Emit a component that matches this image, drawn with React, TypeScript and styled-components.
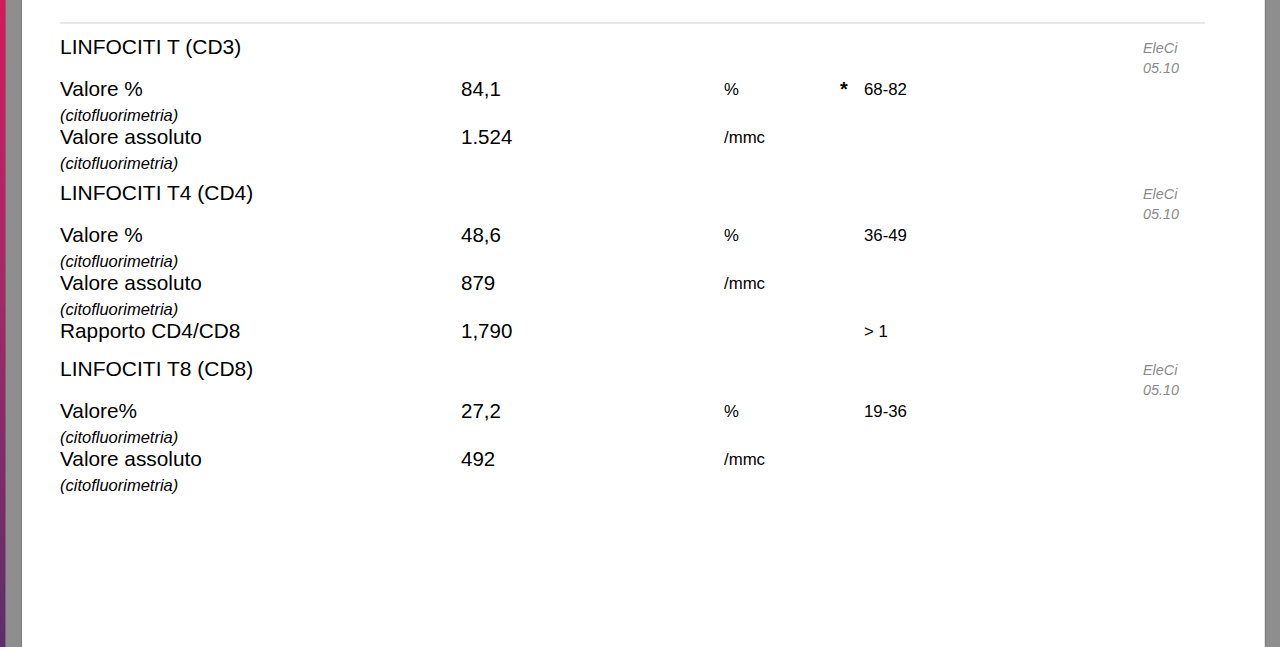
import React from "react";
import styled, { createGlobalStyle } from "styled-components";

type Row = {
	label: string;
	value: string;
	unit?: string;
	flag?: string;
	range?: string;
	method?: string;
};

type Section = {
	title: string;
	user: string;
	time: string;
	rows: Row[];
};

const METHOD = "(citofluorimetria)";

const sections: Section[] = [
	{
		title: "LINFOCITI T (CD3)",
		user: "EleCi",
		time: "05.10",
		rows: [
			{ label: "Valore %", value: "84,1", unit: "%", flag: "*", range: "68-82", method: METHOD },
			{ label: "Valore assoluto", value: "1.524", unit: "/mmc", method: METHOD },
		],
	},
	{
		title: "LINFOCITI T4 (CD4)",
		user: "EleCi",
		time: "05.10",
		rows: [
			{ label: "Valore %", value: "48,6", unit: "%", range: "36-49", method: METHOD },
			{ label: "Valore assoluto", value: "879", unit: "/mmc", method: METHOD },
			{ label: "Rapporto CD4/CD8", value: "1,790", range: "> 1" },
		],
	},
	{
		title: "LINFOCITI T8 (CD8)",
		user: "EleCi",
		time: "05.10",
		rows: [
			{ label: "Valore%", value: "27,2", unit: "%", range: "19-36", method: METHOD },
			{ label: "Valore assoluto", value: "492", unit: "/mmc", method: METHOD },
		],
	},
];

export default function App() {
	return (
		<>
			<GlobalStyle />
			<Screen>
				<AccentStrip />
				<Desk>
					<Page>
						<Rule />
						{sections.map((s) => (
							<Block key={s.title}>
								<Header>
									<Title>{s.title}</Title>
									<Stamp>
										{s.user}
										<br />
										{s.time}
									</Stamp>
								</Header>
								{s.rows.map((r) => (
									<ResultRow key={r.label} $bare={!r.method}>
										<LabelCell>
											<Label>{r.label}</Label>
											{r.method && <Method>{r.method}</Method>}
										</LabelCell>
										<Value>{r.value}</Value>
										<Unit>{r.unit}</Unit>
										<Flag>{r.flag}</Flag>
										<Range>{r.range}</Range>
									</ResultRow>
								))}
							</Block>
						))}
					</Page>
				</Desk>
			</Screen>
		</>
	);
}

const GlobalStyle = createGlobalStyle`
	html, body {
		margin: 0;
		padding: 0;
		height: 100%;
		overflow: hidden;
	}
	body {
		font-family: "Liberation Sans", Arial, Helvetica, sans-serif;
		color: #000;
	}
`;

const Screen = styled.div`
	display: flex;
	height: 100vh;
	overflow: hidden;
`;

const AccentStrip = styled.div`
	width: 5px;
	flex-shrink: 0;
	background: linear-gradient(180deg, #d3195a 0%, #a52868 45%, #5d2d6b 100%);
`;

const Desk = styled.div`
	flex: 1;
	display: flex;
	background: #8e8e8e;
	border-left: 1px solid #6c6c6c;
	padding: 0 15px 0 16px;
`;

const Page = styled.div`
	flex: 1;
	background: #fff;
	box-shadow: 0 0 2px rgba(0, 0, 0, 0.35);
	border-right: 1px solid #e4e4e4;
	padding: 22px 59px 0 38px;
`;

const Rule = styled.div`
	height: 2px;
	background: #e8e8e8;
	margin-bottom: 13px;
`;

const Block = styled.div`
	margin-bottom: 10px;
`;

const Header = styled.div`
	display: flex;
	justify-content: space-between;
	align-items: flex-start;
	height: 40px;
`;

const Title = styled.div`
	font-size: 21px;
	line-height: 20px;
`;

const Stamp = styled.div`
	width: 62px;
	margin-left: -1px;
	font-size: 14.4px;
	line-height: 20px;
	font-style: italic;
	color: #8a8a8a;
	padding-top: 1px;
`;

const ResultRow = styled.div<{ $bare: boolean }>`
	display: grid;
	grid-template-columns: 401px 263px 116px 24px 1fr;
	align-items: start;
	padding-bottom: ${(p) => (p.$bare ? "5px" : "0")};
`;

const LabelCell = styled.div`
	display: flex;
	flex-direction: column;
`;

const Label = styled.div`
	font-size: 20.8px;
	line-height: 24px;
`;

const Method = styled.div`
	font-size: 16.5px;
	font-style: italic;
	line-height: 20px;
	padding-top: 4px;
`;

const Value = styled.div`
	font-size: 20.5px;
	line-height: 24px;
`;

const Unit = styled.div`
	font-size: 16.8px;
	line-height: 24px;
	padding-top: 1px;
`;

const Flag = styled.div`
	font-size: 20px;
	font-weight: bold;
	line-height: 24px;
`;

const Range = styled.div`
	font-size: 16.8px;
	line-height: 24px;
	padding-top: 1px;
`;
